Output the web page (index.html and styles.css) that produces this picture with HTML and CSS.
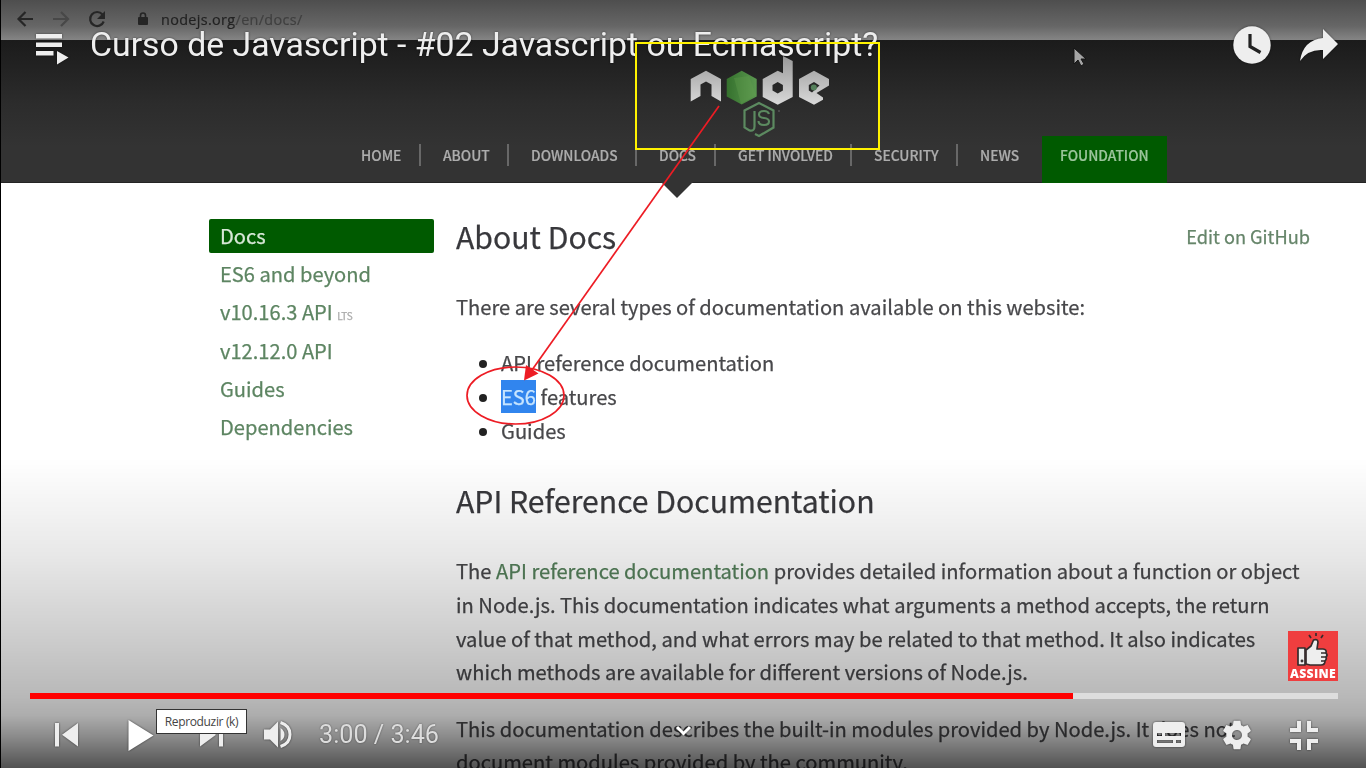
FILE: index.html
```
<!DOCTYPE html>
<html lang="pt-BR">
<head>
<meta charset="utf-8">
<title>Curso de Javascript - #02 Javascript ou Ecmascript?</title>
<link rel="stylesheet" href="styles.css">
</head>
<body>
<main class="player">
  <section class="video">
    <div class="browser-bar">
      <svg class="nav-icons" width="110" height="38" viewBox="0 0 110 38" fill="none" stroke="#262626" stroke-width="2.2">
        <path d="M33 19H19M25.500 12l-7 7 7 7"/>
        <path d="M53 19h14M61 12l7 7-7 7" stroke="#484848"/>
        <path d="M102.500 14.500a7 7 0 1 0 1.200 7"/><path d="M105 11v8h-8z" fill="#262626" stroke="none"/>
      </svg>
      <div class="address">
        <svg width="10" height="14" viewBox="0 0 10 14"><rect y="5" width="10" height="8" rx="1" fill="#252525"/><path d="M2.500 6V3.500a2.500 2.500 0 0 1 5 0V6" fill="none" stroke="#252525" stroke-width="1.600"/></svg>
        <span class="url"><b>nodejs.org</b>/en/docs/</span>
      </div>
    </div>
    <header class="site-header">
      <svg class="logo" width="144" height="86" viewBox="688 54 144 86">
        <defs>
          <linearGradient id="silver" gradientUnits="userSpaceOnUse" x1="0" y1="56" x2="0" y2="104"><stop stop-color="#999"/><stop offset="1" stop-color="#d8d8d8"/></linearGradient>
          <linearGradient id="green" x2="1" y2="0"><stop stop-color="#35712d"/><stop offset="1" stop-color="#5b9850"/></linearGradient>
        </defs>
        <g fill="url(#silver)">
          <path d="M690.700 79L706 70.700 721 79v22.500l-9.500-5.500V84.500L706 81.500l-5.500 3V96l-9.800 5.500z"/>
          <path fill-rule="evenodd" d="M783 56l9.700 5v36L777.700 104.700 762.700 97V79l15-8.200 5.300 2.500zM777.700 82l-5.200 3v5.500l5.200 3 5.200-3V85z"/>
          <path d="M814 70.700L829 79v6.500l-12.500 7.500 6.500 4.500 0 2.200-9 5-15-7.700V79zm0 11.300l-5.200 3v5.500l3.200 2 7.500-7z"/>
        </g>
        <circle cx="813.800" cy="87.500" r="3" fill="#55805b"/>
        <path d="M741.700 70.700l15 8.300v17.500l-15 8-15-8V79z" fill="url(#green)"/>
        <path d="M734 78l7 26 15-9-7-19z" fill="#66a34f" opacity=".3"/>
        <path d="M755 134l4 2 14.500-8.500v-17L759 103l-14.500 7.500v17l5 3q5 1 5-4V111" fill="none" stroke="#5c8a60" stroke-width="2.200"/>
        <path d="M769 114q-1-3-5-3-5 0-5 3.500 0 3 5 3.500 5 .5 5 3.500 0 3.500-5 3.500-5.500 0-5.500-4" fill="none" stroke="#5c8a60" stroke-width="2.100"/>
        <circle cx="779" cy="111" r="1" fill="#555"/>
      </svg>
      <nav class="site-nav">
        <a>HOME</a><a>ABOUT</a><a>DOWNLOADS</a><a class="current">DOCS</a><a>GET INVOLVED</a><a>SECURITY</a><a>NEWS</a><a class="foundation">FOUNDATION</a>
      </nav>
    </header>
    <div class="content">
      <aside class="sidebar">
        <a class="active">Docs</a><a>ES6 and beyond</a><a>v10.16.3 API <small>LTS</small></a><a>v12.12.0 API</a><a>Guides</a><a>Dependencies</a>
      </aside>
      <article class="article">
        <div class="heading-row"><h1>About Docs</h1><a class="edit">Edit on GitHub</a></div>
        <p class="intro">There are several types of documentation available on this website:</p>
        <ul><li>API reference documentation</li><li><mark>ES6</mark> features</li><li>Guides</li></ul>
        <h2>API Reference Documentation</h2>
        <p>The <a>API reference documentation</a> provides detailed information about a function or object<br>in Node.js. This documentation indicates what arguments a method accepts, the return<br>value of that method, and what errors may be related to that method. It also indicates<br>which methods are available for different versions of Node.js.</p>
        <p class="last">This documentation describes the built-in modules provided by Node.js. It does not<br>document modules provided by the community.</p>
      </article>
    </div>
    <svg class="pointer" width="14" height="20" viewBox="0 0 14 20"><path d="M1 1v16l4-4 3 6 3-2-3-5h5z" fill="#a5a5a5" stroke="#151515"/></svg>
  </section>
  <div class="shade"></div>

  <div class="top-bar">
    <svg width="34" height="32" viewBox="35 33 34 32" fill="#eee"><path d="M36 34h26v4.500H36zM36 42.500h26V47H36zM36 51h17.500v4.500H36zM57 51l11.500 6.500L57 64.500z"/></svg>
    <div class="title">Curso de Javascript - #02 Javascript ou Ecmascript?</div>
    <svg class="later" width="38" height="38" viewBox="1232.500 26 38 38"><circle cx="1251.500" cy="45" r="18.700" fill="#eee"/><path d="M1249.500 34v12.500l10.500 6" fill="none" stroke="#222" stroke-width="3.200"/></svg>
    <svg class="share" width="40" height="38" viewBox="1299 26 40 38"><path d="M1323 29l15 15-15 15v-9q-15-1-23 11 3-21 23-23z" fill="#eee"/></svg>
  </div>

  <div class="badge">
    <svg width="50" height="36" viewBox="0 0 50 36" fill="#eee" stroke="#352c2d" stroke-width="1.700" stroke-linejoin="round">
      <path d="M18 19l5-4 2.500-6q4-1.500 4.500 2l-1 7h6q4 .5 3 4 2 2 0 4 1 2-1 4 0 4-4 4H22l-4-1z"/><path d="M10 17h7v17h-7z"/>
      <path d="M28 2v3M21 4l2 3M35 4l-2 3M33 22h5M33 26h5M33 30h4" fill="none"/><circle cx="14" cy="30" r=".6"/>
    </svg>
    <span>ASSINE</span>
  </div>
  <div class="progress"><div class="played"></div></div>

  <div class="controls">
    <svg class="icon prev" width="28" height="30" viewBox="53 720 28 30"><path d="M55 723h4v23.500h-4zM78 723v23.500L62 734.700z"/></svg>
    <svg class="icon play" width="30" height="36" viewBox="126 716 30 36"><path d="M128.500 719v31l25-15.500z" fill="#fff"/></svg>
    <svg class="icon next" width="28" height="30" viewBox="198 720 28 30"><path d="M200 723v23.500l16-11.800zM219 723h4v23.500h-4z"/></svg>
    <svg class="icon volume" width="32" height="32" viewBox="262 719 32 32"><path d="M264 729.500h6l8-8v26l-8-8h-6zM280.500 728q4 2.500 4 6.500t-4 6.500z"/><path d="M280.500 722.500q9.500 3 9.500 12t-9.500 12" fill="none" stroke="#eee" stroke-width="3"/></svg>
    <span class="time">3:00 / 3:46</span>
    <svg class="icon chevron" width="20" height="14" viewBox="674 722 20 14"><path d="M677 726l6.500 6.500 6.500-6.500" fill="none" stroke="#fff" stroke-width="3"/></svg>
    <svg class="icon cc" width="36" height="30" viewBox="1151 720 36 30"><path fill-rule="evenodd" d="M1156 722h26q3 0 3 3v19q0 3-3 3h-26q-3 0-3-3v-19q0-3 3-3zM1157 733v3h5v-3zm8 0v3h16v-3zm-8 7v3h16v-3zm19 0v3h5v-3z"/></svg>
    <svg class="icon gear" width="32" height="32" viewBox="9 9 18 18"><path d="m 23.94,18.78 c .03,-0.25 .05,-0.51 .05,-0.78 0,-0.27 -0.02,-0.52 -0.05,-0.78 l 1.68,-1.32 c .15,-0.12 .19,-0.33 .09,-0.51 l -1.6,-2.76 c -0.09,-0.17 -0.31,-0.24 -0.48,-0.17 l -1.99,.8 c -0.41,-0.32 -0.86,-0.58 -1.35,-0.78 l -0.30,-2.12 c -0.02,-0.19 -0.19,-0.33 -0.39,-0.33 l -3.2,0 c -0.2,0 -0.36,.14 -0.39,.33 l -0.30,2.12 c -0.48,.2 -0.93,.47 -1.35,.78 l -1.99,-0.8 c -0.18,-0.07 -0.39,0 -0.48,.17 l -1.6,2.76 c -0.10,.17 -0.05,.39 .09,.51 l 1.68,1.32 c -0.03,.25 -0.05,.52 -0.05,.78 0,.26 .02,.52 .05,.78 l -1.68,1.32 c -0.15,.12 -0.19,.33 -0.09,.51 l 1.6,2.76 c .09,.17 .31,.24 .48,.17 l 1.99,-0.8 c .41,.32 .86,.58 1.35,.78 l .30,2.12 c .02,.19 .19,.33 .39,.33 l 3.2,0 c .2,0 .36,-0.14 .39,-0.33 l .30,-2.12 c .48,-0.2 .93,-0.47 1.35,-0.78 l 1.99,.8 c .18,.07 .39,0 .48,-0.17 l 1.6,-2.76 c .09,-0.17 .05,-0.39 -0.09,-0.51 l -1.68,-1.32 z m -5.94,2.01 c -1.54,0 -2.8,-1.25 -2.8,-2.8 0,-1.54 1.25,-2.8 2.8,-2.8 1.54,0 2.8,1.25 2.8,2.8 0,1.54 -1.25,2.8 -2.8,2.8 z"/></svg>
    <svg class="icon shrink" width="32" height="32" viewBox="1288 718 32 32"><path d="M1297 720h4v11h-11v-4h7zM1307 720h4v7h7v4h-11zM1290 738h11v11h-4v-7h-7zM1307 738h11v4h-7v7h-4z"/></svg>
  </div>
  <div class="tooltip">Reproduzir (k)</div>

  <svg class="annotations" width="1366" height="768" viewBox="0 0 1366 768" fill="none">
    <rect x="636" y="43" width="243" height="106" stroke="#fff200" stroke-width="2"/>
    <path d="M719 106L532 370" stroke="#ed1c24" stroke-width="1.700"/>
    <path d="M524 380.500l2-15.500 12.500 8.500z" fill="#ed1c24"/>
    <ellipse cx="515.500" cy="395.500" rx="48.500" ry="28.500" stroke="#ed1c24" stroke-width="1.700"/>
  </svg>
</main>
</body>
</html>
```
FILE: styles.css
```
* { box-sizing: border-box; }
body { margin: 0; background: #000; }
.player { position: relative; width: 1366px; height: 768px; overflow: hidden; font-family: Roboto, sans-serif; }
.video { height: 768px; border-left: 1px solid #000; background: #fff; overflow: hidden; font-family: "Noto Sans CJK JP", sans-serif; color: #48484b; }
.browser-bar { height: 40px; display: flex; background: linear-gradient(#4e4e4e, #666 65%, #858585); }
.nav-icons { margin-left: -1px; flex: none; filter: blur(.5px); }
.address { display: flex; align-items: center; height: 38px; margin-left: 28px; gap: 13px; filter: blur(.4px); }
.url { font-family: "Open Sans", sans-serif; font-size: 14.4px; line-height: 18px; margin-top: 2px; color: #3f3f3f; letter-spacing: .35px; -webkit-text-stroke: .2px; }
.url b { font-weight: 500; color: #222; }
.site-header { height: 143px; display: flex; flex-direction: column; border-bottom: 1px solid #242424; background: linear-gradient(#1b1b1b, #2c2c2c 45%, #333 75%, #333); }
.logo { margin: 14px 0 0 687px; flex: none; filter: blur(.5px); }
.site-nav { display: grid; grid-template-columns: 60px 88px 128px 79px 136px 106px 84px 125px; margin: -4px 0 0 360px; height: 47px; font-size: 13.8px; font-weight: 500; color: #adadad; filter: blur(.45px); -webkit-text-stroke: .2px; }
.site-nav a { position: relative; height: 22px; margin-top: 8px; line-height: 23px; padding-left: 22px; border-right: 2px solid #686868; white-space: nowrap; }
.site-nav a:first-child { padding-left: 0; }
.site-nav a:nth-child(7) { border: 0; }
.site-nav .foundation { margin: 0; height: 47px; line-height: 39px; padding-left: 18px; border: 0; background: #005a00; color: #9cc59c; }
.site-nav .current::after { content: ""; position: absolute; left: 24px; top: 38px; border: 16px solid transparent; border-top-color: #333; border-bottom: 0; }
.content { display: grid; grid-template-columns: 225px 870px; column-gap: 22px; padding: 36px 0 0 208px; filter: blur(.5px); -webkit-text-stroke: .25px; }
.sidebar { font-size: 20.1px; color: #5d8562; }
.sidebar a { display: block; height: 34px; margin-bottom: 4.200px; padding-left: 11px; line-height: 34px; }
.sidebar .active { background: #005a00; color: #d7e8d7; border-radius: 2px; }
.sidebar small { font-size: 10px; color: #aaa; }
.heading-row { display: flex; justify-content: space-between; height: 34px; width: 854px; line-height: 34px; }
h1, h2 { margin: 0; font-size: 30.17px; font-weight: 400; line-height: 34px; color: #38383c; }
.edit { font-size: 18.2px; color: #66856a; }
.article p, .article li { font-size: 20.15px; line-height: 33.700px; }
.article p { margin: 0; white-space: nowrap; }
.article .intro { margin-top: 37px; }
.article ul { margin: 22.4px 0 22px; padding-left: 45px; }
.article li::marker { color: #222; }
mark { display: inline-block; background: #3185ee; color: #c7e5ff; height: 33px; line-height: 33px; vertical-align: top; }
.article h2 { padding-top: 14px; height: 52px; }
.article h2 + p { margin-top: 33px; }
.article p a { color: #55805b; }
.article .last { margin-top: 22.5px; }
.pointer { position: absolute; left: 1073px; top: 47px; filter: blur(.5px); }
.shade { position: absolute; inset: 458px 0 0; background: linear-gradient(transparent, rgba(0,0,0,.02) 7%, rgba(0,0,0,.09) 31%, rgba(0,0,0,.2) 59%, rgba(0,0,0,.28) 77%, rgba(0,0,0,.32) 83%, rgba(0,0,0,.46) 90%, rgba(0,0,0,.68)); }
.top-bar { position: absolute; left: 35px; right: 27px; top: 26px; height: 38px; display: flex; align-items: center; filter: drop-shadow(0 0 1px rgba(0,0,0,.5)); }
.top-bar > svg { flex: none; }
.top-bar > svg:first-child { margin-top: 8px; }
.title { margin: 0 0 0 21px; font-size: 33.8px; line-height: 38px; color: #eee; white-space: nowrap; }
.later { margin-left: auto; }
.share { margin-left: 28px; }
.badge { position: absolute; left: 1288px; top: 631px; width: 50px; height: 50px; background: #ef3e3f; text-align: center; }
.badge svg { display: block; }
.badge span { display: block; font: 800 12.2px/14px "Open Sans", sans-serif; letter-spacing: .3px; color: #fff; }
.progress { position: absolute; left: 30px; right: 28px; top: 693px; height: 6px; background: #ddd; }
.played { width: 1043px; height: 6px; background: #f00; }
.controls { position: absolute; left: 0; right: 0; top: 704px; height: 61px; display: flex; align-items: center; }
.icon { flex: none; fill: #eee; filter: drop-shadow(0 0 1px rgba(0,0,0,.6)); }
.prev { margin-left: 53px; }
.play { margin-left: 45px; }
.next { margin-left: 42px; }
.volume { margin-left: 36px; }
.time { margin-left: 25px; width: 130px; font-size: 25.2px; color: #ddd; white-space: nowrap; text-shadow: 0 0 2px rgba(0,0,0,.5); }
.chevron { margin: -10px 0 0 225px; }
.cc { margin-left: 457px; }
.gear { margin-left: 34px; }
.shrink { margin-left: 35px; }
.tooltip { position: absolute; left: 156px; top: 709px; width: 91px; height: 25px; border: 1px solid #333; background: #fff; color: #444; text-align: center; font: 12px/23px "Open Sans", sans-serif; letter-spacing: -.35px; white-space: nowrap; }
.annotations { position: absolute; inset: 0; pointer-events: none; }
```
